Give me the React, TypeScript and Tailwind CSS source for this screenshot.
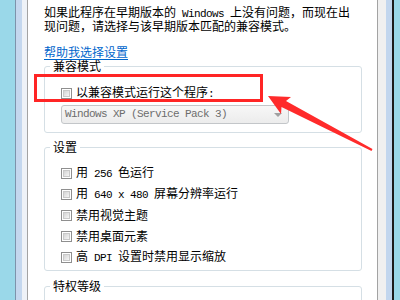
import React from 'react';

const M: React.FC<{ children: React.ReactNode }> = ({ children }) => (
  <span className="font-['Liberation_Mono',monospace] text-[11px] tracking-[-0.6px]">{children}</span>
);

const CheckBox: React.FC = () => (
  <span className="flex w-[11px] h-[11px] shrink-0 border border-[#8f8f8f] bg-white p-px">
    <span className="flex-1 bg-linear-to-br from-[#d4d4d4] to-[#f6f6f6] border border-[#c9c9c9]" />
  </span>
);

const Option: React.FC<{ children: React.ReactNode }> = ({ children }) => (
  <div className="flex items-center h-[12px] gap-[4px] whitespace-nowrap">
    <CheckBox />
    <span className="leading-[12px]">{children}</span>
  </div>
);

const Group: React.FC<{ title: string; className?: string; children: React.ReactNode }> = ({ title, className, children }) => (
  <fieldset className={`border border-[#d5dfe5] rounded-[3px] pl-[16px] ${className ?? ''}`}>
    <legend className="-ml-[11px] px-[3px] leading-[12px]">{title}</legend>
    {children}
  </fieldset>
);

export default function App() {
  return (
    <div className="relative flex w-[400px] h-[300px] overflow-hidden bg-white text-[12px] text-black font-['Noto_Sans_CJK_SC',sans-serif]">
      {/* window frame, left */}
      <div className="w-[15px] bg-[#9ad8e9]" />
      <div className="w-px bg-[#7d93ab]" />
      <div className="w-[6px] bg-[#c4d7ee]" />
      <div className="w-[5px] bg-[#eef2f7]" />
      <div className="w-px bg-[#a3a3a3]" />

      {/* tab page */}
      <div className="flex-1 flex flex-col pl-[16px] pr-[15px] pt-[6px]">
        <p className="leading-[12px] whitespace-nowrap">
          如果此程序在早期版本的<M> Windows </M>上没有问题，而现在出
          <br />
          现问题，请选择与该早期版本匹配的兼容模式。
        </p>

        <a className="mt-[14px] leading-[12px] text-[#0066cc] underline underline-offset-2 w-fit">帮助我选择设置</a>

        <Group title="兼容模式" className="mt-[2px] pt-[15px] pb-[8px]">
          <Option>
            以兼容模式运行这个程序<M>:</M>
          </Option>
          <div className="mt-[6px] flex items-center justify-between w-[228px] h-[19px] pl-[3px] pr-[6px] rounded-[3px] border border-[#c3c6c9] bg-linear-to-b from-[#f7f7f7] to-[#ececec] text-[#6d6d6d]">
            <M>Windows XP (Service Pack 3)</M>
            <span className="w-0 h-0 border-l-[4px] border-r-[4px] border-t-[4px] border-l-transparent border-r-transparent border-t-[#a0a0a0]" />
          </div>
        </Group>

        <Group title="设置" className="mt-[8px] pt-[14px] pb-[7px]">
          <div className="flex flex-col gap-[9px]">
            <Option>
              用<M> 256 </M>色运行
            </Option>
            <Option>
              用<M> 640 x 480 </M>屏幕分辨率运行
            </Option>
            <Option>禁用视觉主题</Option>
            <Option>禁用桌面元素</Option>
            <Option>
              高<M> DPI </M>设置时禁用显示缩放
            </Option>
          </div>
        </Group>

        <Group title="特权等级" className="mt-[9px] pt-[12px] pb-[7px]">
          <Option>以管理员身份运行此程序</Option>
        </Group>
      </div>

      {/* window frame, right */}
      <div className="w-px bg-[#a3a3a3]" />
      <div className="w-[8px] bg-[#f0f0f0]" />
      <div className="w-[6px] bg-[#c2d6ee]" />
      <div className="w-[2px] bg-[#1c1c1c]" />
      <div className="w-[6px] bg-[#9ad8e9]" />

      {/* annotation: red box and arrow */}
      <div className="absolute left-[34px] top-[74px] w-[229px] h-[28px] border-[3px] border-[#ff2525]" />
      <svg className="absolute inset-0 pointer-events-none" width="400" height="300" viewBox="0 0 400 300">
        <polygon
          fill="#ff2b2b"
          points="268,96 291,97 286,101 372.5,149 371.5,151 281.5,107 281,114"
        />
      </svg>
    </div>
  );
}
